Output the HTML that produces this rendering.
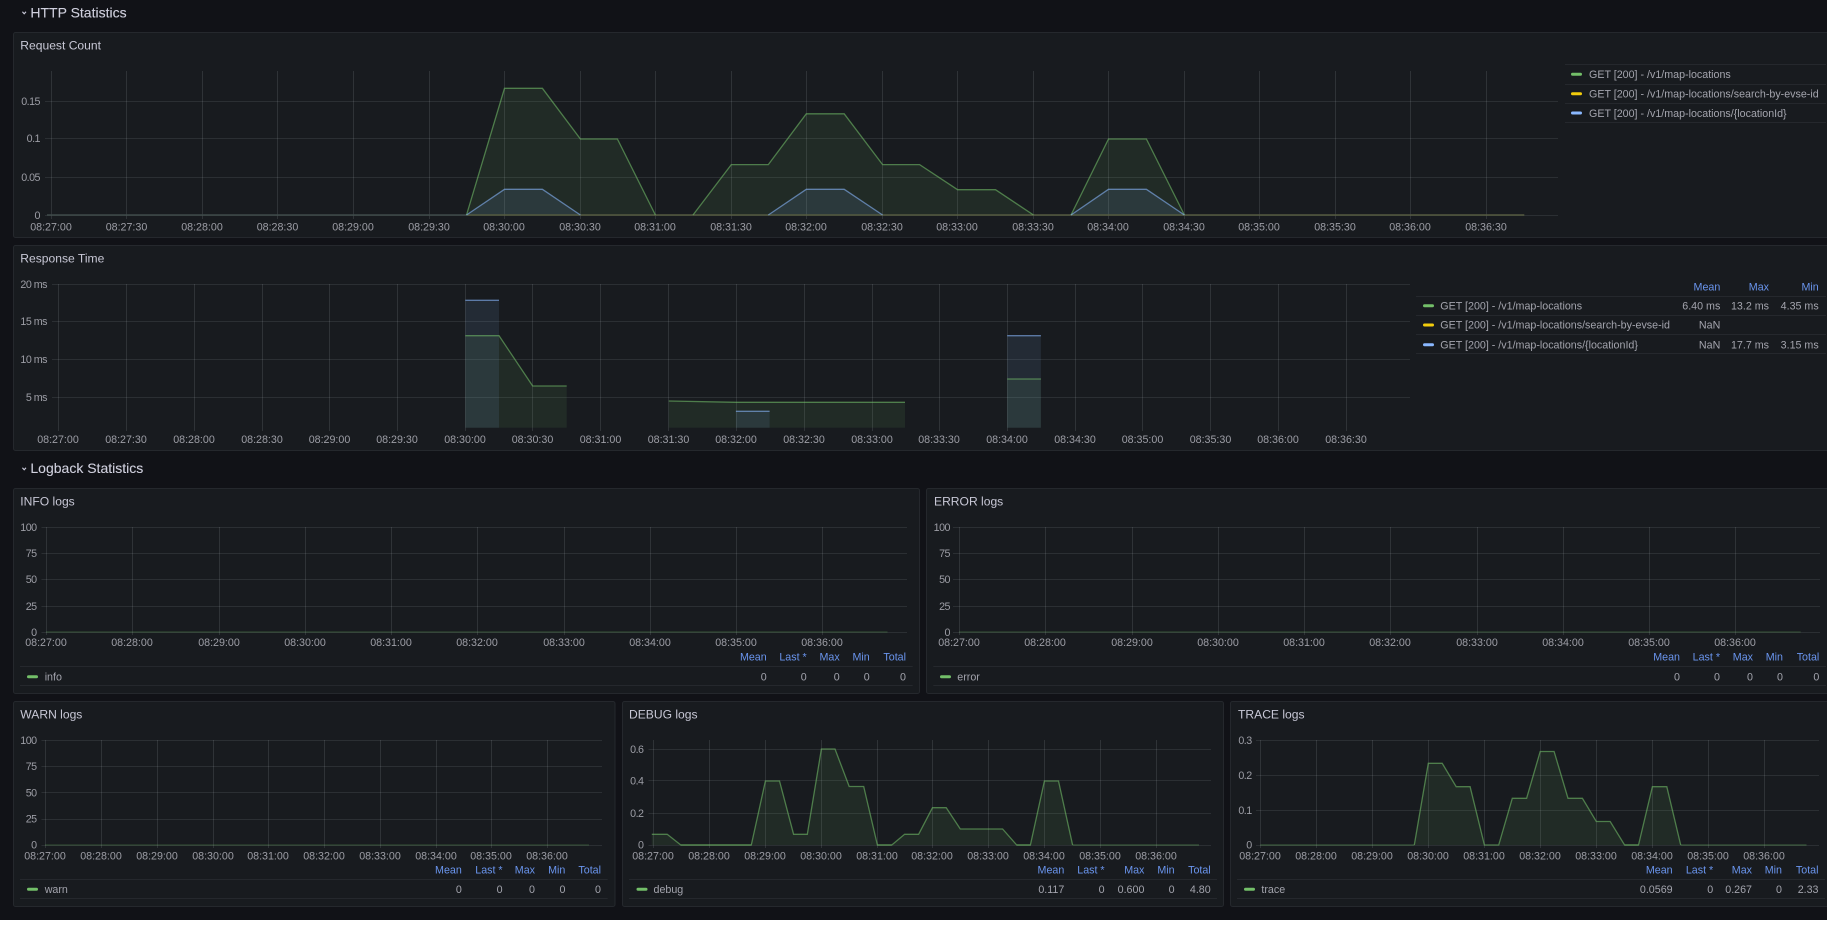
<!DOCTYPE html>
<html lang="en">
<head>
<meta charset="utf-8">
<title>Grafana Dashboard</title>
<style>
html,body{margin:0;padding:0;background:#fff;width:1827px;height:930px;overflow:hidden}
svg{display:block;font-family:"Liberation Sans",Arial,sans-serif;filter:blur(.3px)}
.panel{fill:#181b1f;stroke:#25282d;stroke-width:1}
.grid{stroke:#f0faff;stroke-opacity:.11;stroke-width:1;fill:none}
.hgrid{stroke:#f0faff;stroke-opacity:.09;stroke-width:1;fill:none}
.row{font-size:14px;fill:#d0d0de;stroke:#d0d0de;stroke-width:.1}
.title{font-size:12.1px;fill:#c8c8d6}
.ax text{font-size:10.7px;fill:#9d9ea6}
.ax .end text{letter-spacing:-.5px}
.lg text{font-size:10.7px;fill:#a3a4ad}
.hd text{font-size:10.7px;fill:#6a95ee;text-anchor:end}
.end{text-anchor:end}
.mid{text-anchor:middle}
.gl{fill:none;stroke:#73bf69;stroke-opacity:.58;stroke-width:1.3}
.gf{fill:#73bf69;fill-opacity:.1;stroke:none}
.bl{fill:none;stroke:#8ab8ff;stroke-opacity:.58;stroke-width:1.3}
.bf{fill:#8ab8ff;fill-opacity:.1;stroke:none}
.sep{stroke:#25282d;stroke-width:1}
.chev{fill:none;stroke:#ccccdc;stroke-width:1.1}
</style>
</head>
<body>
<svg width="1827" height="930" viewBox="0 0 1827 930" xmlns="http://www.w3.org/2000/svg">
<rect x="0" y="0" width="1827" height="920" fill="#111217"/>
<rect x="0" y="920" width="1827" height="10" fill="#ffffff"/>

<!-- Row 1 -->
<path class="chev" d="M22.4 11.8L24.2 13.8L26 11.8"/>
<text class="row" x="30.4" y="17.4">HTTP Statistics</text>

<!-- Request Count -->
<rect class="panel" x="13.5" y="32.5" width="1830" height="205" rx="2"/>
<text class="title" x="20.3" y="49.3">Request Count</text>
<path class="hgrid" d="M45 101.5H1558M45 138.5H1558M45 177.5H1558M45 215.5H1558"/>
<path class="grid" d="M51.5 71V219M126.5 71V219M202.5 71V219M277.5 71V219M353.5 71V219M429.5 71V219M504.5 71V219M580.5 71V219M655.5 71V219M731.5 71V219M806.5 71V219M882.5 71V219M957.5 71V219M1033.5 71V219M1108.5 71V219M1184.5 71V219M1259.5 71V219M1335.5 71V219M1410.5 71V219M1486.5 71V219"/>
<path class="gf" d="M466.5 215L504.5 88.3L542.4 88.3L580.4 139L617.4 139L655.4 215ZM693 215L731.3 164.6L768.3 164.6L806.3 113.8L844.2 113.8L882.6 164.6L919.6 164.6L957.6 189.7L995.5 189.7L1033.5 215ZM1071 215L1108.5 139L1146.4 139L1184.4 215Z"/>
<path class="bf" d="M466.5 215L504.5 189.3L542.4 189.3L580.4 215ZM768.3 215L806.3 189.3L844.2 189.3L882.6 215ZM1071 215L1108.5 189.3L1146.4 189.3L1184.4 215Z"/>
<path d="M47 215H466.5" stroke="#3f4b4a" stroke-width="1.6" fill="none"/>
<path d="M466.5 215H1524.3" stroke="#555b40" stroke-width="1.6" fill="none"/>
<path class="gl" d="M466.5 215L504.5 88.3L542.4 88.3L580.4 139L617.4 139L655.4 215M693 215L731.3 164.6L768.3 164.6L806.3 113.8L844.2 113.8L882.6 164.6L919.6 164.6L957.6 189.7L995.5 189.7L1033.5 215M1071 215L1108.5 139L1146.4 139L1184.4 215"/>
<path class="bl" d="M466.5 215L504.5 189.3L542.4 189.3L580.4 215M768.3 215L806.3 189.3L844.2 189.3L882.6 215M1071 215L1108.5 189.3L1146.4 189.3L1184.4 215"/>
<g class="ax">
<g class="end">
<text x="40" y="105">0.15</text><text x="40" y="142">0.1</text><text x="40" y="181">0.05</text><text x="40" y="219">0</text>
</g>
<g class="mid">
<text x="51" y="230.5">08:27:00</text><text x="126.5" y="230.5">08:27:30</text><text x="202" y="230.5">08:28:00</text><text x="277.5" y="230.5">08:28:30</text><text x="353" y="230.5">08:29:00</text><text x="429" y="230.5">08:29:30</text><text x="504" y="230.5">08:30:00</text><text x="580" y="230.5">08:30:30</text><text x="655" y="230.5">08:31:00</text><text x="731" y="230.5">08:31:30</text><text x="806" y="230.5">08:32:00</text><text x="882" y="230.5">08:32:30</text><text x="957" y="230.5">08:33:00</text><text x="1033" y="230.5">08:33:30</text><text x="1108" y="230.5">08:34:00</text><text x="1184" y="230.5">08:34:30</text><text x="1259" y="230.5">08:35:00</text><text x="1335" y="230.5">08:35:30</text><text x="1410" y="230.5">08:36:00</text><text x="1486" y="230.5">08:36:30</text>
</g>
</g>
<path class="sep" d="M1565 64.5H1826M1565 84.5H1826M1565 103.5H1826M1565 122.5H1826"/>
<rect x="1571" y="72.8" width="11" height="3" rx="1.5" fill="#73bf69"/>
<rect x="1571" y="92.2" width="11" height="3" rx="1.5" fill="#f2cc0c"/>
<rect x="1571" y="111.5" width="11" height="3" rx="1.5" fill="#8ab8ff"/>
<g class="lg">
<text x="1589" y="78.2">GET [200] - /v1/map-locations</text>
<text x="1589" y="97.5">GET [200] - /v1/map-locations/search-by-evse-id</text>
<text x="1589" y="116.8">GET [200] - /v1/map-locations/{locationId}</text>
</g>

<!-- Response Time -->
<rect class="panel" x="13.5" y="245.5" width="1830" height="205" rx="2"/>
<text class="title" x="20.3" y="262.6">Response Time</text>
<path class="hgrid" d="M52 284.5H1410M52 321.5H1410M52 359.5H1410M52 397.5H1410"/>
<path class="grid" d="M58.5 284V431M126.5 284V431M194.5 284V431M262.5 284V431M329.5 284V431M397.5 284V431M465.5 284V431M532.5 284V431M600.5 284V431M668.5 284V431M736.5 284V431M804.5 284V431M872.5 284V431M939.5 284V431M1007.5 284V431M1075.5 284V431M1142.5 284V431M1210.5 284V431M1278.5 284V431M1346.5 284V431"/>
<path class="gf" d="M465.3 427.7V335.7H499L532.7 386H566.7V427.7ZM668.8 427.7V401L735.9 402.3H905V427.7ZM1007.2 427.7V379H1040.9V427.7Z"/>
<path class="bf" d="M465.3 427.7V300.3H499V427.7ZM735.9 427.7V411.3H769.6V427.7ZM1007.2 427.7V335.7H1040.9V427.7Z"/>
<path class="gl" d="M465.3 335.7H499L532.7 386H566.7M668.8 401L735.9 402.3H905M1007.2 379H1040.9"/>
<path class="bl" d="M465.3 300.3H499M735.9 411.3H769.6M1007.2 335.7H1040.9"/>
<g class="ax">
<g class="end">
<text x="47" y="287.8">20 ms</text><text x="47" y="325.1">15 ms</text><text x="47" y="363.1">10 ms</text><text x="47" y="400.8">5 ms</text>
</g>
<g class="mid">
<text x="58" y="443.2">08:27:00</text><text x="126" y="443.2">08:27:30</text><text x="194" y="443.2">08:28:00</text><text x="262" y="443.2">08:28:30</text><text x="329.5" y="443.2">08:29:00</text><text x="397" y="443.2">08:29:30</text><text x="465" y="443.2">08:30:00</text><text x="532.5" y="443.2">08:30:30</text><text x="600.5" y="443.2">08:31:00</text><text x="668.5" y="443.2">08:31:30</text><text x="736" y="443.2">08:32:00</text><text x="804" y="443.2">08:32:30</text><text x="872" y="443.2">08:33:00</text><text x="939" y="443.2">08:33:30</text><text x="1007" y="443.2">08:34:00</text><text x="1075" y="443.2">08:34:30</text><text x="1142.5" y="443.2">08:35:00</text><text x="1210.5" y="443.2">08:35:30</text><text x="1278" y="443.2">08:36:00</text><text x="1346" y="443.2">08:36:30</text>
</g>
</g>
<g class="hd"><text x="1720.3" y="290.5">Mean</text><text x="1769" y="290.5">Max</text><text x="1818.7" y="290.5">Min</text></g>
<path class="sep" d="M1416 296.5H1826M1416 315.5H1826M1416 334.5H1826M1416 353.5H1826"/>
<rect x="1423" y="304.2" width="11" height="3" rx="1.5" fill="#73bf69"/>
<rect x="1423" y="323.5" width="11" height="3" rx="1.5" fill="#f2cc0c"/>
<rect x="1423" y="343.2" width="11" height="3" rx="1.5" fill="#8ab8ff"/>
<g class="lg">
<text x="1440.3" y="309.5">GET [200] - /v1/map-locations</text>
<text x="1440.3" y="328.5">GET [200] - /v1/map-locations/search-by-evse-id</text>
<text x="1440.3" y="348.5">GET [200] - /v1/map-locations/{locationId}</text>
<g class="end">
<text x="1720.3" y="309.5">6.40 ms</text><text x="1769" y="309.5">13.2 ms</text><text x="1818.7" y="309.5">4.35 ms</text>
<text x="1720.3" y="328.5">NaN</text>
<text x="1720.3" y="348.5">NaN</text><text x="1769" y="348.5">17.7 ms</text><text x="1818.7" y="348.5">3.15 ms</text>
</g>
</g>

<!-- Row 2 -->
<path class="chev" d="M22.4 467.8L24.2 469.8L26 467.8"/>
<text class="row" x="30.4" y="473.2">Logback Statistics</text>

<!-- INFO logs -->
<rect class="panel" x="13.5" y="488.5" width="906" height="205" rx="2"/>
<text class="title" x="20.3" y="505.6">INFO logs</text>
<path class="hgrid" d="M41.5 527.5H907M41.5 553.5H907M41.5 579.5H907M41.5 606.5H907M41.5 632.5H907"/>
<path class="grid" d="M46.5 527V635M132.5 527V635M219.5 527V635M305.5 527V635M391.5 527V635M477.5 527V635M564.5 527V635M650.5 527V635M736.5 527V635M822.5 527V635"/>
<path d="M46 632H887.5" stroke="#73bf69" stroke-opacity=".22" stroke-width="1.6" fill="none"/>
<g class="ax">
<g class="end"><text x="36.6" y="530.8">100</text><text x="36.6" y="557.1">75</text><text x="36.6" y="583.1">50</text><text x="36.6" y="609.8">25</text><text x="36.6" y="635.8">0</text></g>
<g class="mid"><text x="46" y="646">08:27:00</text><text x="132" y="646">08:28:00</text><text x="219" y="646">08:29:00</text><text x="305" y="646">08:30:00</text><text x="391" y="646">08:31:00</text><text x="477" y="646">08:32:00</text><text x="564" y="646">08:33:00</text><text x="650" y="646">08:34:00</text><text x="736" y="646">08:35:00</text><text x="822" y="646">08:36:00</text></g>
</g>
<g class="hd"><text x="766.7" y="660.5">Mean</text><text x="806.7" y="660.5">Last *</text><text x="839.7" y="660.5">Max</text><text x="869.7" y="660.5">Min</text><text x="906" y="660.5">Total</text></g>
<path class="sep" d="M20 666.5H912.7M20 685.5H912.7"/>
<rect x="27" y="675.2" width="11" height="3" rx="1.5" fill="#73bf69"/>
<g class="lg"><text x="44.7" y="680.5">info</text>
<g class="end"><text x="766.7" y="680.5">0</text><text x="806.7" y="680.5">0</text><text x="839.7" y="680.5">0</text><text x="869.7" y="680.5">0</text><text x="906" y="680.5">0</text></g></g>

<!-- ERROR logs -->
<rect class="panel" x="926.5" y="488.5" width="910" height="205" rx="2"/>
<text class="title" x="934" y="505.6">ERROR logs</text>
<path class="hgrid" d="M953 527.5H1820M953 553.5H1820M953 579.5H1820M953 606.5H1820M953 632.5H1820"/>
<path class="grid" d="M959.5 527V635M1045.5 527V635M1132.5 527V635M1218.5 527V635M1304.5 527V635M1390.5 527V635M1477.5 527V635M1563.5 527V635M1649.5 527V635M1735.5 527V635"/>
<path d="M959 632H1800.7" stroke="#73bf69" stroke-opacity=".22" stroke-width="1.6" fill="none"/>
<g class="ax">
<g class="end"><text x="950" y="530.8">100</text><text x="950" y="557.1">75</text><text x="950" y="583.1">50</text><text x="950" y="609.8">25</text><text x="950" y="635.8">0</text></g>
<g class="mid"><text x="959" y="646">08:27:00</text><text x="1045" y="646">08:28:00</text><text x="1132" y="646">08:29:00</text><text x="1218" y="646">08:30:00</text><text x="1304" y="646">08:31:00</text><text x="1390" y="646">08:32:00</text><text x="1477" y="646">08:33:00</text><text x="1563" y="646">08:34:00</text><text x="1649" y="646">08:35:00</text><text x="1735" y="646">08:36:00</text></g>
</g>
<g class="hd"><text x="1680" y="660.5">Mean</text><text x="1720" y="660.5">Last *</text><text x="1753" y="660.5">Max</text><text x="1783" y="660.5">Min</text><text x="1819.3" y="660.5">Total</text></g>
<path class="sep" d="M933.3 666.5H1826M933.3 685.5H1826"/>
<rect x="940" y="675.2" width="11" height="3" rx="1.5" fill="#73bf69"/>
<g class="lg"><text x="957.3" y="680.5">error</text>
<g class="end"><text x="1680" y="680.5">0</text><text x="1720" y="680.5">0</text><text x="1753" y="680.5">0</text><text x="1783" y="680.5">0</text><text x="1819.3" y="680.5">0</text></g></g>

<!-- WARN logs -->
<rect class="panel" x="13.5" y="701.5" width="601.5" height="205" rx="2"/>
<text class="title" x="20.3" y="718.3">WARN logs</text>
<path class="hgrid" d="M41.5 740.5H602M41.5 766.5H602M41.5 792.5H602M41.5 819.5H602M41.5 845.5H602"/>
<path class="grid" d="M45.5 740V848M101.5 740V848M157.5 740V848M213.5 740V848M268.5 740V848M324.5 740V848M380.5 740V848M436.5 740V848M491.5 740V848M547.5 740V848"/>
<path d="M45 845H589" stroke="#73bf69" stroke-opacity=".22" stroke-width="1.6" fill="none"/>
<g class="ax">
<g class="end"><text x="36.6" y="744">100</text><text x="36.6" y="770">75</text><text x="36.6" y="796.4">50</text><text x="36.6" y="822.7">25</text><text x="36.6" y="848.7">0</text></g>
<g class="mid"><text x="45" y="859.5">08:27:00</text><text x="101" y="859.5">08:28:00</text><text x="157" y="859.5">08:29:00</text><text x="213" y="859.5">08:30:00</text><text x="268" y="859.5">08:31:00</text><text x="324" y="859.5">08:32:00</text><text x="380" y="859.5">08:33:00</text><text x="436" y="859.5">08:34:00</text><text x="491" y="859.5">08:35:00</text><text x="547" y="859.5">08:36:00</text></g>
</g>
<g class="hd"><text x="461.8" y="873.5">Mean</text><text x="502.6" y="873.5">Last *</text><text x="535" y="873.5">Max</text><text x="565.4" y="873.5">Min</text><text x="601" y="873.5">Total</text></g>
<path class="sep" d="M20 879.5H607.7M20 898.5H607.7"/>
<rect x="27" y="887.8" width="11" height="3" rx="1.5" fill="#73bf69"/>
<g class="lg"><text x="44.7" y="893">warn</text>
<g class="end"><text x="461.8" y="893">0</text><text x="502.6" y="893">0</text><text x="535" y="893">0</text><text x="565.4" y="893">0</text><text x="601" y="893">0</text></g></g>

<!-- DEBUG logs -->
<rect class="panel" x="622.5" y="701.5" width="601" height="205" rx="2"/>
<text class="title" x="629" y="718.3">DEBUG logs</text>
<path class="hgrid" d="M648.5 749.5H1211M648.5 780.5H1211M648.5 813.5H1211M648.5 845.5H1211"/>
<path class="grid" d="M653.5 740V848M709.5 740V848M765.5 740V848M821.5 740V848M877.5 740V848M932.5 740V848M988.5 740V848M1044.5 740V848M1100.5 740V848M1156.5 740V848"/>
<path class="gf" d="M651.8 845V834.3L667.2 834.3L680.8 845L751.3 845L765.4 781L779.5 781L793.6 834.3L807.3 834.3L821.4 749L835 749L849.2 786.5L863.7 786.5L877.4 845L891.8 845L904.6 834.3L918.6 834.3L932.5 807.7L946.2 807.7L960.3 829L1002.6 829L1016.7 845L1030.4 845L1044.4 781L1058.5 781L1072.6 845Z"/>
<path class="gl" d="M651.8 834.3L667.2 834.3L680.8 845L751.3 845L765.4 781L779.5 781L793.6 834.3L807.3 834.3L821.4 749L835 749L849.2 786.5L863.7 786.5L877.4 845L891.8 845L904.6 834.3L918.6 834.3L932.5 807.7L946.2 807.7L960.3 829L1002.6 829L1016.7 845L1030.4 845L1044.4 781L1058.5 781L1072.6 845"/>
<path d="M680.8 845H751.3M877.4 845H891.8M1016.7 845H1030.4M1072.6 845H1199" stroke="#73bf69" stroke-opacity=".3" stroke-width="1.4" fill="none"/>
<g class="ax">
<g class="end"><text x="643.5" y="752.8">0.6</text><text x="643.5" y="784.5">0.4</text><text x="643.5" y="816.8">0.2</text><text x="643.5" y="848.7">0</text></g>
<g class="mid"><text x="653" y="859.5">08:27:00</text><text x="709" y="859.5">08:28:00</text><text x="765" y="859.5">08:29:00</text><text x="821" y="859.5">08:30:00</text><text x="877" y="859.5">08:31:00</text><text x="932" y="859.5">08:32:00</text><text x="988" y="859.5">08:33:00</text><text x="1044" y="859.5">08:34:00</text><text x="1100" y="859.5">08:35:00</text><text x="1156" y="859.5">08:36:00</text></g>
</g>
<g class="hd"><text x="1064.3" y="873.5">Mean</text><text x="1104.6" y="873.5">Last *</text><text x="1144.4" y="873.5">Max</text><text x="1174.6" y="873.5">Min</text><text x="1210.7" y="873.5">Total</text></g>
<path class="sep" d="M629 879.5H1217M629 898.5H1217"/>
<rect x="636.5" y="887.8" width="11" height="3" rx="1.5" fill="#73bf69"/>
<g class="lg"><text x="653.5" y="893">debug</text>
<g class="end"><text x="1064.3" y="893">0.117</text><text x="1104.6" y="893">0</text><text x="1144.4" y="893">0.600</text><text x="1174.6" y="893">0</text><text x="1210.7" y="893">4.80</text></g></g>

<!-- TRACE logs -->
<rect class="panel" x="1230.5" y="701.5" width="610" height="205" rx="2"/>
<text class="title" x="1238" y="718.3">TRACE logs</text>
<path class="hgrid" d="M1256 740.5H1819M1256 775.5H1819M1256 810.5H1819M1256 845.5H1819"/>
<path class="grid" d="M1260.5 740V848M1316.5 740V848M1372.5 740V848M1428.5 740V848M1484.5 740V848M1540.5 740V848M1596.5 740V848M1652.5 740V848M1708.5 740V848M1764.5 740V848"/>
<path class="gf" d="M1414.3 845L1428.3 763.3L1442.2 763.3L1456.2 786.7L1470.1 786.7L1484.4 845L1498.7 845L1512.3 798.3L1526.6 798.3L1540.2 751.5L1554.1 751.5L1568 798.3L1582.4 798.3L1596.3 821.5L1610.2 821.5L1624.6 845L1638.5 845L1652.4 786.7L1666.8 786.7L1680.7 845Z"/>
<path class="gl" d="M1414.3 845L1428.3 763.3L1442.2 763.3L1456.2 786.7L1470.1 786.7L1484.4 845L1498.7 845L1512.3 798.3L1526.6 798.3L1540.2 751.5L1554.1 751.5L1568 798.3L1582.4 798.3L1596.3 821.5L1610.2 821.5L1624.6 845L1638.5 845L1652.4 786.7L1666.8 786.7L1680.7 845"/>
<path d="M1260.3 845H1414.3M1624.6 845H1638.5M1680.7 845H1806.5" stroke="#73bf69" stroke-opacity=".3" stroke-width="1.4" fill="none"/>
<g class="ax">
<g class="end"><text x="1251.7" y="744">0.3</text><text x="1251.7" y="778.8">0.2</text><text x="1251.7" y="813.8">0.1</text><text x="1251.7" y="848.7">0</text></g>
<g class="mid"><text x="1260" y="859.5">08:27:00</text><text x="1316" y="859.5">08:28:00</text><text x="1372" y="859.5">08:29:00</text><text x="1428" y="859.5">08:30:00</text><text x="1484" y="859.5">08:31:00</text><text x="1540" y="859.5">08:32:00</text><text x="1596" y="859.5">08:33:00</text><text x="1652" y="859.5">08:34:00</text><text x="1708" y="859.5">08:35:00</text><text x="1764" y="859.5">08:36:00</text></g>
</g>
<g class="hd"><text x="1672.6" y="873.5">Mean</text><text x="1713.2" y="873.5">Last *</text><text x="1752" y="873.5">Max</text><text x="1782" y="873.5">Min</text><text x="1818.5" y="873.5">Total</text></g>
<path class="sep" d="M1237 879.5H1825M1237 898.5H1825"/>
<rect x="1244" y="887.8" width="11" height="3" rx="1.5" fill="#73bf69"/>
<g class="lg"><text x="1261.4" y="893">trace</text>
<g class="end"><text x="1672.6" y="893">0.0569</text><text x="1713.2" y="893">0</text><text x="1752" y="893">0.267</text><text x="1782" y="893">0</text><text x="1818.5" y="893">2.33</text></g></g>
</svg>
</body>
</html>
